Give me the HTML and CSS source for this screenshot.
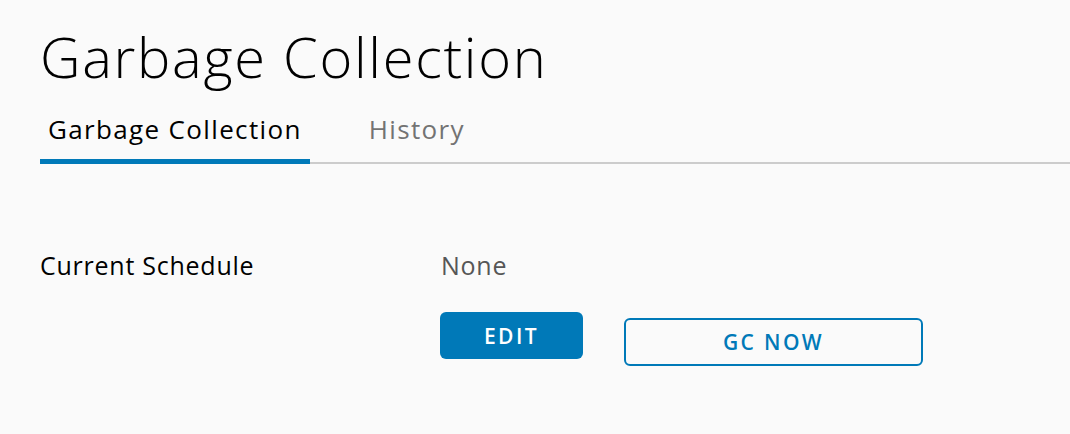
FILE: index.html
```html
<!DOCTYPE html>
<html>
<head>
<meta charset="utf-8">
<link rel="stylesheet" href="styles.css">
</head>
<body>
<div class="page">
  <h1 class="title">Garbage Collection</h1>
  <nav class="tabs">
    <div class="tab active">Garbage Collection</div>
    <div class="tab">History</div>
  </nav>
  <section class="content">
    <div class="row">
      <div class="label">Current Schedule</div>
      <div class="value">None</div>
    </div>
    <div class="actions">
      <button class="btn btn-primary">EDIT</button>
      <button class="btn btn-outline">GC NOW</button>
    </div>
  </section>
</div>
</body>
</html>
```
FILE: styles.css
```css
html, body {
  margin: 0;
  padding: 0;
  background: #fafafa;
  font-family: "Open Sans", "Liberation Sans", sans-serif;
}
.page {
  padding-left: 40px;
}
.title {
  margin: 0;
  padding-top: 24px;
  font-size: 56px;
  font-weight: 300;
  line-height: 64px;
  color: #000;
  letter-spacing: 1.7px;
}
.tabs {
  display: flex;
  gap: 51px;
  margin-top: 23px;
  border-bottom: 2px solid #cccccc;
}
.tab {
  padding: 0 8px;
  font-size: 26px;
  line-height: 36px;
  letter-spacing: 1.35px;
  color: #737373;
  padding-bottom: 12px;
  margin-bottom: -2px;
  border-bottom: 5px solid transparent;
}
.tab.active {
  color: #000;
  border-bottom-color: #0079b8;
}
.content {
  padding-top: 84px;
}
.row {
  display: flex;
  font-size: 25px;
  line-height: 34px;
  letter-spacing: 0.75px;
}
.label {
  width: 401px;
  color: #000;
}
.value {
  color: #565656;
}
.actions {
  display: flex;
  align-items: flex-start;
  margin-top: 30px;
  padding-left: 400px;
  gap: 41px;
}
.btn {
  font-family: inherit;
  font-size: 21px;
  font-weight: 600;
  letter-spacing: 2.4px;
  border-radius: 6px;
  cursor: pointer;
}
.btn-primary {
  width: 143px;
  height: 47px;
  background: #0079b8;
  color: #fff;
  border: 0;
}
.btn-outline {
  margin-top: 6px;
  width: 299px;
  height: 48px;
  background: transparent;
  color: #0079b8;
  border: 2px solid #0079b8;
}
```
